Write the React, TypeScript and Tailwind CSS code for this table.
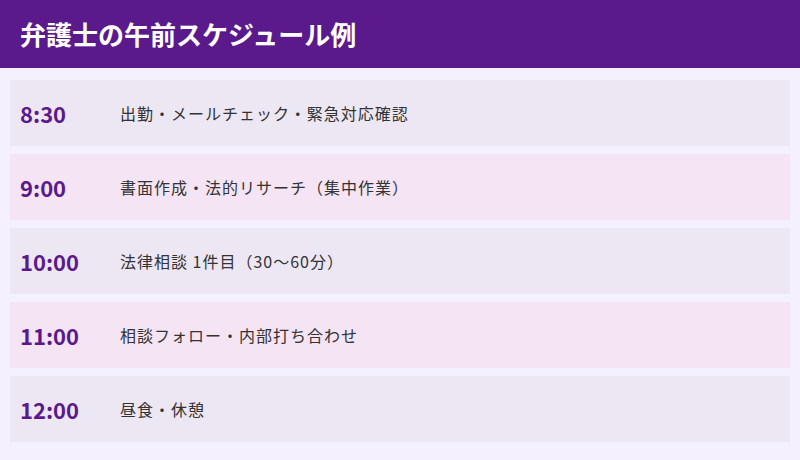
import React from "react";

interface Slot {
  time: string;
  task: string;
}

const slots: Slot[] = [
  { time: "8:30", task: "出勤・メールチェック・緊急対応確認" },
  { time: "9:00", task: "書面作成・法的リサーチ（集中作業）" },
  { time: "10:00", task: "法律相談 1件目（30〜60分）" },
  { time: "11:00", task: "相談フォロー・内部打ち合わせ" },
  { time: "12:00", task: "昼食・休憩" },
];

export default function App() {
  return (
    <div
      className="w-[800px] h-[460px] bg-[#f4f0fd] overflow-hidden"
      style={{ fontFamily: '"Noto Sans CJK JP", "Noto Sans", sans-serif' }}
    >
      <div className="h-[68px] bg-[#5b1a8b] flex items-center px-[20px]">
        <h1 className="text-white text-[26px] font-bold leading-none">
          弁護士の午前スケジュール例
        </h1>
      </div>

      <div className="flex flex-col gap-[8px] px-[10px] pt-[12px]">
        {slots.map((slot, i) => (
          <div
            key={slot.time}
            className={
              "h-[66px] flex items-center px-[10px] " +
              (i % 2 === 0 ? "bg-[#ede7f4]" : "bg-[#f4e4f4]")
            }
          >
            <div className="w-[100px] text-[22px] font-bold text-[#5b1a8b]">
              {slot.time}
            </div>
            <div className="text-[16px] tracking-[1px] text-[#333333]">
              {slot.task}
            </div>
          </div>
        ))}
      </div>
    </div>
  );
}
